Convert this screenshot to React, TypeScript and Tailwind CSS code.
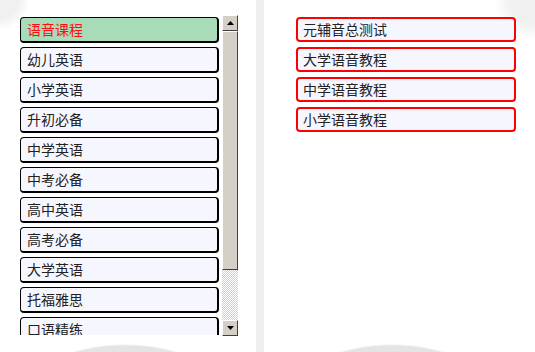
const leftItems = [
  "语音课程",
  "幼儿英语",
  "小学英语",
  "升初必备",
  "中学英语",
  "中考必备",
  "高中英语",
  "高考必备",
  "大学英语",
  "托福雅思",
  "口语精练",
];

const rightItems = ["元辅音总测试", "大学语音教程", "中学语音教程", "小学语音教程"];

function ScrollButton({ down }: { down?: boolean }) {
  return (
    <div className="w-[16px] h-[16px] bg-[#d4d0c8] border border-t-white border-l-white border-b-[#404040] border-r-[#404040] flex items-center justify-center">
      <svg width="7" height="4" viewBox="0 0 7 4">
        {down ? <polygon points="0,0 7,0 3.5,4" fill="#000" /> : <polygon points="0,4 7,4 3.5,0" fill="#000" />}
      </svg>
    </div>
  );
}

function App() {
  return (
    <div
      className="w-[535px] h-[352px] overflow-hidden flex bg-white bg-[radial-gradient(95px_46px_at_125px_390px,#e4e4e4_96%,transparent_100%),radial-gradient(95px_46px_at_392px_390px,#e4e4e4_96%,transparent_100%),radial-gradient(30px_30px_at_0px_0px,#f0f0f0_60%,transparent_100%),radial-gradient(40px_40px_at_535px_0px,#f0f0f0_60%,transparent_100%)]"
      style={{ fontFamily: '"Noto Sans CJK SC", "Liberation Sans", sans-serif' }}
    >
      <div className="w-[256px] shrink-0 pt-[15px] pl-[20px]">
        <div className="flex gap-[3px]">
          <div className="w-[199px] h-[320px] overflow-hidden pt-[2px] flex flex-col gap-[4px]">
            {leftItems.map((t, i) => (
              <div
                key={t}
                className={
                  "h-[26px] shrink-0 rounded-[4px] border-black border-t border-l border-b-2 border-r-2 flex items-center pl-[6px] pb-[2px] text-[14px] leading-none " +
                  (i === 0 ? "bg-[#a8dcb8] text-[#ff1010]" : "bg-[#f6f6ff] text-[#222]")
                }
              >
                {t}
              </div>
            ))}
          </div>
          <div className="w-[16px] h-[321px] flex flex-col">
            <ScrollButton />
            <div className="h-[239px] bg-[#d4d0c8] border border-t-white border-l-white border-b-[#404040] border-r-[#404040]" />
            <div className="flex-1 bg-[repeating-conic-gradient(#d4d0c8_0_25%,#ffffff_0_50%)] bg-[length:2px_2px]" />
            <ScrollButton down />
          </div>
        </div>
      </div>
      <div className="w-[8px] shrink-0 bg-[#efefef]" />
      <div className="flex-1 pt-[17px] pl-[32px]">
        <div className="w-[220px] flex flex-col gap-[5px]">
          {rightItems.map((t) => (
            <div
              key={t}
              className="h-[25px] rounded-[4px] border-2 border-[#ff0000] bg-[#f6f6ff] flex items-center pl-[5px] pb-[2px] text-[14px] leading-none text-[#222]"
            >
              {t}
            </div>
          ))}
        </div>
      </div>
    </div>
  );
}

export default App;
